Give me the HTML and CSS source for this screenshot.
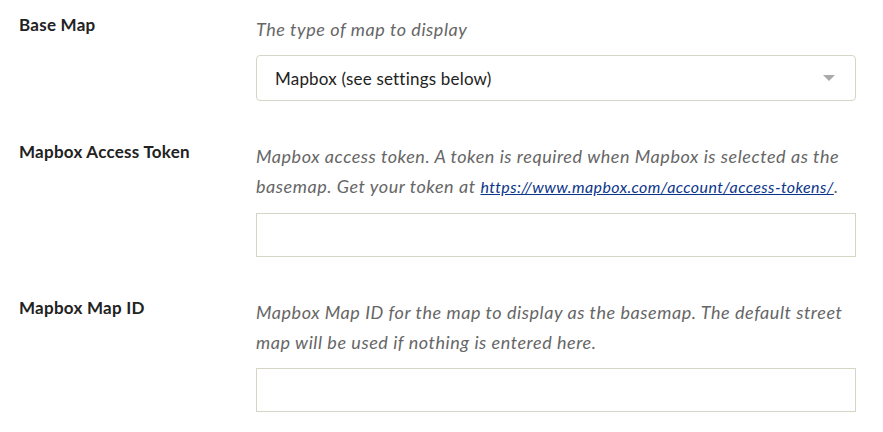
FILE: index.html
```html
<!DOCTYPE html>
<html>
<head>
<meta charset="utf-8">
<link rel="stylesheet" href="styles.css">
</head>
<body>
<div class="form">
  <div class="row">
    <div class="label">Base Map</div>
    <div class="field">
      <p class="desc">The type of map to display</p>
      <div class="select">
        <span>Mapbox (see settings below)</span>
        <span class="arrow"></span>
      </div>
    </div>
  </div>
  <div class="row">
    <div class="label">Mapbox Access Token</div>
    <div class="field">
      <p class="desc">Mapbox access token. A token is required when Mapbox is selected as the basemap. Get your token at <a href="#">https://www.mapbox.com/account/access-tokens/</a>.</p>
      <div class="input"></div>
    </div>
  </div>
  <div class="row">
    <div class="label">Mapbox Map ID</div>
    <div class="field">
      <p class="desc">Mapbox Map ID for the map to display as the basemap. The default street map will be used if nothing is entered here.</p>
      <div class="input"></div>
    </div>
  </div>
</div>
</body>
</html>
```
FILE: styles.css
```css
html, body {
  margin: 0;
  padding: 0;
  background: #fff;
}
body {
  font-family: Lato, "Open Sans", sans-serif;
  color: #222;
}
.form {
  padding: 14px 27px 0 19px;
  display: flex;
  flex-direction: column;
  gap: 40px;
}
.row {
  display: flex;
}
.label {
  width: 237px;
  flex: none;
  font-weight: bold;
  font-size: 17px;
  letter-spacing: 0.25px;
  line-height: 22px;
  color: #222;
}
.field {
  flex: 1;
  display: flex;
  flex-direction: column;
  gap: 11px;
}
.desc {
  margin: 0;
  font-style: italic;
  font-size: 18px;
  letter-spacing: 0.55px;
  line-height: 30px;
  color: #666;
}
.desc a {
  color: #0a358a;
  text-decoration: underline;
  font-size: 16px;
  letter-spacing: 0.4px;
}
.select {
  height: 46px;
  box-sizing: border-box;
  border: 1px solid #d6d4c6;
  border-radius: 4px;
  display: flex;
  align-items: center;
  justify-content: space-between;
  padding: 0 20px 0 18px;
  font-size: 17px;
  letter-spacing: 0.2px;
  color: #222;
}
.arrow {
  width: 0;
  height: 0;
  border-left: 6px solid transparent;
  border-right: 6px solid transparent;
  border-top: 6px solid #aaa;
}
.input {
  height: 44px;
  box-sizing: border-box;
  border: 1px solid #d6d4c6;
}
```
